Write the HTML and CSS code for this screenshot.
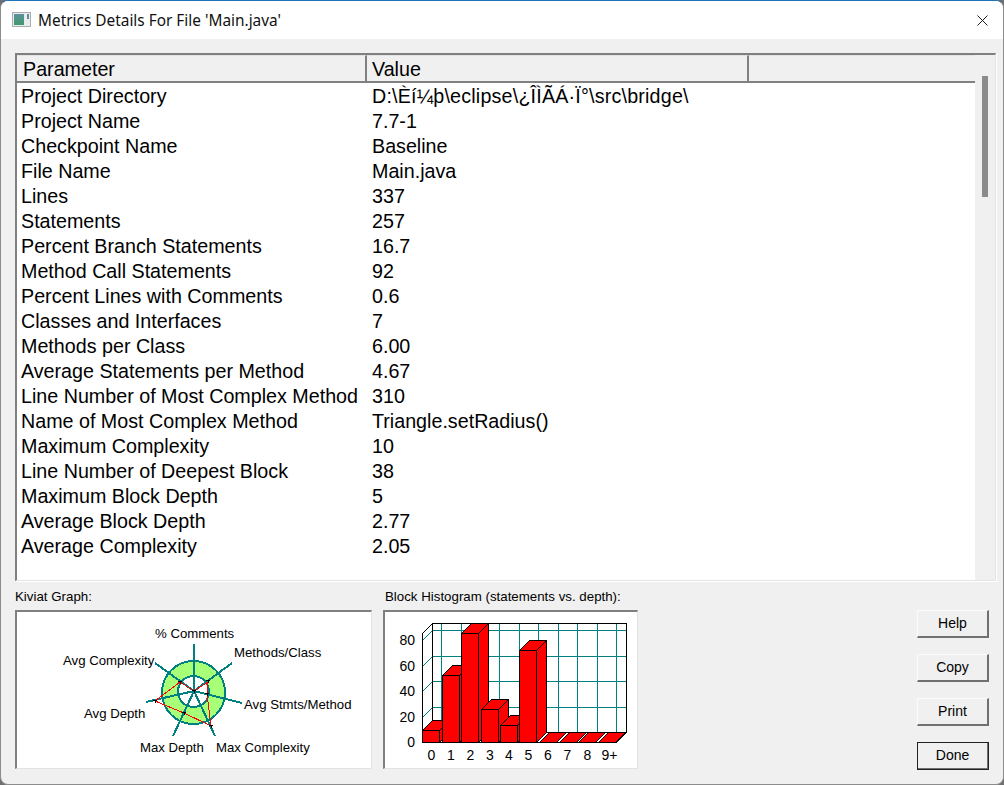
FILE: index.html
```html
<!DOCTYPE html>
<html lang="en">
<head>
    <meta charset="UTF-8">
    <title>Metrics Details For File 'Main.java'</title>
    <link rel="stylesheet" href="styles.css">
</head>
<body>
    <div class="window">
        <div class="titlebar">
            <div class="title-left">
                <svg class="app-icon" width="20" height="16" viewBox="0 0 20 16">
                    <defs>
                        <linearGradient id="iconFill" x1="0" y1="0" x2="0" y2="1">
                            <stop offset="0" stop-color="#5f8f9f"/>
                            <stop offset="1" stop-color="#3f9a6a"/>
                        </linearGradient>
                    </defs>
                    <rect x="0.5" y="0.5" width="18" height="14" fill="#e8ecec" stroke="#a9adb0"/>
                    <rect x="2" y="2" width="10" height="11" fill="url(#iconFill)"/>
                    <rect x="15" y="2" width="2" height="5" fill="#5f8f9f"/>
                </svg>
                <span class="title-text">Metrics Details For File 'Main.java'</span>
            </div>
            <svg class="close-icon" width="11" height="11" viewBox="0 0 11 11">
                <path d="M0.5 0.5L10.5 10.5M10.5 0.5L0.5 10.5" stroke="#1a1a1a" stroke-width="1" fill="none"/>
            </svg>
        </div>

        <div class="content">
            <div class="grid-box">
                <div class="grid-pane">
                    <table class="metrics">
                        <colgroup>
                            <col class="col-param">
                            <col class="col-value">
                            <col class="col-rest">
                        </colgroup>
                        <thead>
                            <tr><th>Parameter</th><th class="th-value">Value</th><th class="th-rest"></th></tr>
                        </thead>
                        <tbody>
                            <tr><td>Project Directory</td><td class="path-cell">D:\Èí¼þ\eclipse\¿ÎÌÃÁ·Ï°\src\bridge\</td><td></td></tr>
                            <tr><td>Project Name</td><td>7.7-1</td><td></td></tr>
                            <tr><td>Checkpoint Name</td><td>Baseline</td><td></td></tr>
                            <tr><td>File Name</td><td>Main.java</td><td></td></tr>
                            <tr><td>Lines</td><td>337</td><td></td></tr>
                            <tr><td>Statements</td><td>257</td><td></td></tr>
                            <tr><td>Percent Branch Statements</td><td>16.7</td><td></td></tr>
                            <tr><td>Method Call Statements</td><td>92</td><td></td></tr>
                            <tr><td>Percent Lines with Comments</td><td>0.6</td><td></td></tr>
                            <tr><td>Classes and Interfaces</td><td>7</td><td></td></tr>
                            <tr><td>Methods per Class</td><td>6.00</td><td></td></tr>
                            <tr><td>Average Statements per Method</td><td>4.67</td><td></td></tr>
                            <tr><td>Line Number of Most Complex Method</td><td>310</td><td></td></tr>
                            <tr><td>Name of Most Complex Method</td><td>Triangle.setRadius()</td><td></td></tr>
                            <tr><td>Maximum Complexity</td><td>10</td><td></td></tr>
                            <tr><td>Line Number of Deepest Block</td><td>38</td><td></td></tr>
                            <tr><td>Maximum Block Depth</td><td>5</td><td></td></tr>
                            <tr><td>Average Block Depth</td><td>2.77</td><td></td></tr>
                            <tr><td>Average Complexity</td><td>2.05</td><td></td></tr>
                            <tr><td>&nbsp;</td><td></td><td></td></tr>
                            <tr class="rule-row"><td>----------------------------------------------</td><td>----------------------------------------------</td><td></td></tr>
                        </tbody>
                    </table>
                </div>
                <div class="scrollbar"><div class="thumb"></div></div>
            </div>

            <div class="lower">
                <div class="chart-col kiviat-col">
                    <div class="chart-label">Kiviat Graph:</div>
                    <div class="chart-box">
                        <svg class="chart" width="354" height="156" viewBox="17 612 354 156">
                            <circle class="ring" cx="193.5" cy="692.5" r="31.5" fill="#a8ff78"/>
                            <circle class="ring" cx="193.5" cy="691.5" r="15.5" fill="#fff"/>
                            <path class="spokes" d="M194 691L194 644M194 691L232 663M194 691L242 703M194 691L215 736M194 691L173 736M194 691L146 702M194 691L155 663"/>
                            <path class="trace" d="M194 691L208 682L207 694L211 726L184 713L155 701L180 682Z"/>
                            <path class="marks" d="M192 690h4M194 690v3M206 680h4M208 680v3M205 693h4M207 693v3M209 725h4M211 725v3M182 712h4M184 712v3M153 700h4M155 700v3M178 681h4M180 681v3"/>
                            <text x="155" y="638">% Comments</text>
                            <text x="234" y="657">Methods/Class</text>
                            <text x="63" y="665">Avg Complexity</text>
                            <text x="244" y="709">Avg Stmts/Method</text>
                            <text x="84" y="718">Avg Depth</text>
                            <text x="140" y="752">Max Depth</text>
                            <text x="216" y="752">Max Complexity</text>
                        </svg>
                    </div>
                </div>

                <div class="chart-col histo-col">
                    <div class="chart-label histo-label">Block Histogram (statements vs. depth):</div>
                    <div class="chart-box">
                        <svg class="chart" width="252" height="156" viewBox="385 612 252 156">
                            <path class="wall" d="M422.5 633.5L432.5 623.5H626.5V732.5L616.5 742.5H422.5Z"/>
                            <path class="gridline" d="M432.5 630.5H626.5M432.5 656.5H626.5M432.5 681.5H626.5M432.5 707.5H626.5"/>
                            <path class="gridline" d="M441.5 623.5V732.5M461.5 623.5V732.5M480.5 623.5V732.5M499.5 623.5V732.5M519.5 623.5V732.5M538.5 623.5V732.5M558.5 623.5V732.5M577.5 623.5V732.5M597.5 623.5V732.5M616.5 623.5V732.5"/>
                            <path class="gridline" d="M422.5 640.5L432.5 630.5M422.5 666.5L432.5 656.5M422.5 691.5L432.5 681.5M422.5 717.5L432.5 707.5"/>
                            <path class="wall-edge" d="M422.5 742.5V633.5L432.5 623.5H626.5V732.5L616.5 742.5H422.5M432.5 623.5V732.5H626.5"/>

                            <path class="bar" d="M422.5 730.5h17v12h-17zM422.5 730.5l10 -10h17l-10 10zM439.5 730.5l10 -10v12l-10 10z"/>
                            <path class="bar" d="M442.5 675.5h17v67h-17zM442.5 675.5l10 -10h17l-10 10zM459.5 675.5l10 -10v67l-10 10z"/>
                            <path class="bar" d="M461.5 633.5h17v109h-17zM461.5 633.5l10 -10h17l-10 10zM478.5 633.5l10 -10v109l-10 10z"/>
                            <path class="bar" d="M481.5 709.5h17v33h-17zM481.5 709.5l10 -10h17l-10 10zM498.5 709.5l10 -10v33l-10 10z"/>
                            <path class="bar" d="M500.5 725.5h17v17h-17zM500.5 725.5l10 -10h17l-10 10zM517.5 725.5l10 -10v17l-10 10z"/>
                            <path class="bar" d="M519.5 650.5h17v92h-17zM519.5 650.5l10 -10h17l-10 10zM536.5 650.5l10 -10v92l-10 10z"/>
                            <path class="bar" d="M539.5 742.5h17l10 -10h-17zM559.5 742.5h17l10 -10h-17zM578.5 742.5h17l10 -10h-17zM598.5 742.5h17l10 -10h-17z"/>

                            <text class="y-label" x="415" y="645">80</text>
                            <text class="y-label" x="415" y="671">60</text>
                            <text class="y-label" x="415" y="696">40</text>
                            <text class="y-label" x="415" y="722">20</text>
                            <text class="y-label" x="415" y="747">0</text>
                            <text class="x-label" x="431.5" y="760">0</text>
                            <text class="x-label" x="451" y="760">1</text>
                            <text class="x-label" x="470.5" y="760">2</text>
                            <text class="x-label" x="490" y="760">3</text>
                            <text class="x-label" x="509" y="760">4</text>
                            <text class="x-label" x="528.5" y="760">5</text>
                            <text class="x-label" x="548" y="760">6</text>
                            <text class="x-label" x="567.5" y="760">7</text>
                            <text class="x-label" x="587.5" y="760">8</text>
                            <text class="x-label" x="609.5" y="760">9+</text>
                        </svg>
                    </div>
                </div>

                <div class="buttons">
                    <button class="btn">Help</button>
                    <button class="btn">Copy</button>
                    <button class="btn">Print</button>
                    <button class="btn btn-default">Done</button>
                </div>
            </div>
        </div>
    </div>
</body>
</html>
```

FILE: styles.css
```css
html, body {
    margin: 0;
    padding: 0;
}
body {
    width: 1004px;
    height: 785px;
    overflow: hidden;
    background-color: #6f6f6f;
    font-family: "Liberation Sans", Arial, sans-serif;
    color: #000;
}
.window {
    box-sizing: border-box;
    width: 1004px;
    height: 785px;
    display: flex;
    flex-direction: column;
    background-color: #f0f0f0;
    border-radius: 8px;
    border-top: 1px solid #1f73b7;
    border-left: 1px solid #8c8c8c;
    border-right: 1px solid #8c8c8c;
    border-bottom: 1px solid #8c8c8c;
    overflow: hidden;
}

/* title bar */
.titlebar {
    height: 38px;
    flex: none;
    display: flex;
    align-items: center;
    justify-content: space-between;
    background: white;
    padding: 0 15px 0 11px;
}
.title-left {
    display: flex;
    align-items: center;
    gap: 6px;
}
.app-icon {
    display: block;
}
.title-text {
    font-family: "Noto Sans", sans-serif;
    font-size: 15.4px;
    color: #111;
}
.close-icon {
    display: block;
}

/* main grid */
.content {
    flex: 1;
    min-height: 0;
    padding: 14px 7px 0 14px;
}
.grid-box {
    height: 528px;
    box-sizing: border-box;
    display: flex;
    border-top: 2px solid #808080;
    border-left: 2px solid #808080;
    border-right: 1px solid #e3e3e3;
    border-bottom: 1px solid #e3e3e3;
    box-shadow: 1px 1px 0 white;
    width: 981px;
}
.grid-pane {
    width: 958px;
    overflow: hidden;
    background: white;
}
.metrics {
    table-layout: fixed;
    border-collapse: separate;
    border-spacing: 0;
    width: 958px;
    font-size: 19.7px;
}
.col-param { width: 350px; }
.col-value { width: 382px; }
.metrics th {
    height: 27px;
    box-sizing: border-box;
    padding: 2px 0 0 6px;
    text-align: left;
    font-weight: normal;
    background-color: #f0f0f0;
    border-top: 1px solid #e3e3e3;
    border-bottom: 2px solid #808080;
    border-right: 2px solid #808080;
}
.metrics th.th-value {
    padding-left: 5px;
}
.metrics th.th-rest {
    border-right: none;
}
.metrics td {
    box-sizing: border-box;
    height: 24px;
    padding: 0 0 2px 4px;
    white-space: nowrap;
    overflow: hidden;
}
.metrics td:nth-child(2) {
    padding-left: 5px;
}
.metrics tbody tr:first-child td {
    padding-top: 2px;
    height: 26px;
}
.metrics .path-cell {
    letter-spacing: 0.19px;
}
.metrics .rule-row td {
    letter-spacing: 0.44px;
    padding-bottom: 0;
}
.scrollbar {
    flex: 1;
    background-color: #f0f0f0;
    padding: 21px 7px 0 7px;
}
.thumb {
    width: 6px;
    height: 121px;
    background-color: #8b8b8b;
}

/* lower area */
.lower {
    display: flex;
    margin-top: 5px;
}
.chart-col {
    display: flex;
    flex-direction: column;
}
.kiviat-col {
    width: 357px;
    margin-right: 11px;
}
.histo-col {
    width: 255px;
    margin-right: 279px;
}
.chart-label {
    font-size: 13.3px;
    height: 24px;
    line-height: 22px;
}
.histo-label {
    padding-left: 2px;
}
.chart-box {
    box-sizing: border-box;
    height: 159px;
    background: white;
    border-top: 2px solid #808080;
    border-left: 2px solid #808080;
    border-right: 1px solid #e3e3e3;
    border-bottom: 1px solid #e3e3e3;
}
.chart {
    display: block;
}
.chart text {
    font-family: "Liberation Sans", Arial, sans-serif;
    font-size: 13.2px;
    fill: #000;
}
.chart .y-label {
    text-anchor: end;
    font-size: 14px;
}
.chart .x-label {
    text-anchor: middle;
    font-size: 14px;
}
.ring {
    stroke: #008080;
    stroke-width: 2;
    shape-rendering: crispEdges;
}
.spokes {
    fill: none;
    stroke: #008080;
    stroke-width: 2;
    shape-rendering: crispEdges;
}
.trace {
    fill: none;
    stroke: #ff0000;
    stroke-width: 1;
    shape-rendering: crispEdges;
}
.marks {
    fill: none;
    stroke: #000;
    stroke-width: 1;
    shape-rendering: crispEdges;
}
.wall {
    fill: white;
}
.gridline {
    fill: none;
    stroke: #008080;
    stroke-width: 1;
    shape-rendering: crispEdges;
}
.wall-edge {
    fill: none;
    stroke: #000;
    stroke-width: 1;
    shape-rendering: crispEdges;
}
.bar {
    fill: #ff0000;
    stroke: #000;
    stroke-width: 1;
    shape-rendering: crispEdges;
}

/* buttons */
.buttons {
    display: flex;
    flex-direction: column;
    gap: 16px;
    padding-top: 24px;
}
.btn {
    box-sizing: border-box;
    width: 72px;
    height: 28px;
    padding: 0 0 2px 0;
    font-family: "Liberation Sans", Arial, sans-serif;
    font-size: 14px;
    color: #000;
    background-color: #f0f0f0;
    border-style: solid;
    border-width: 1px 2px 2px 1px;
    border-color: #fbfbfb #707070 #707070 #fbfbfb;
}
.btn-default {
    outline: 1px solid #222;
    outline-offset: -1px;
}
```
